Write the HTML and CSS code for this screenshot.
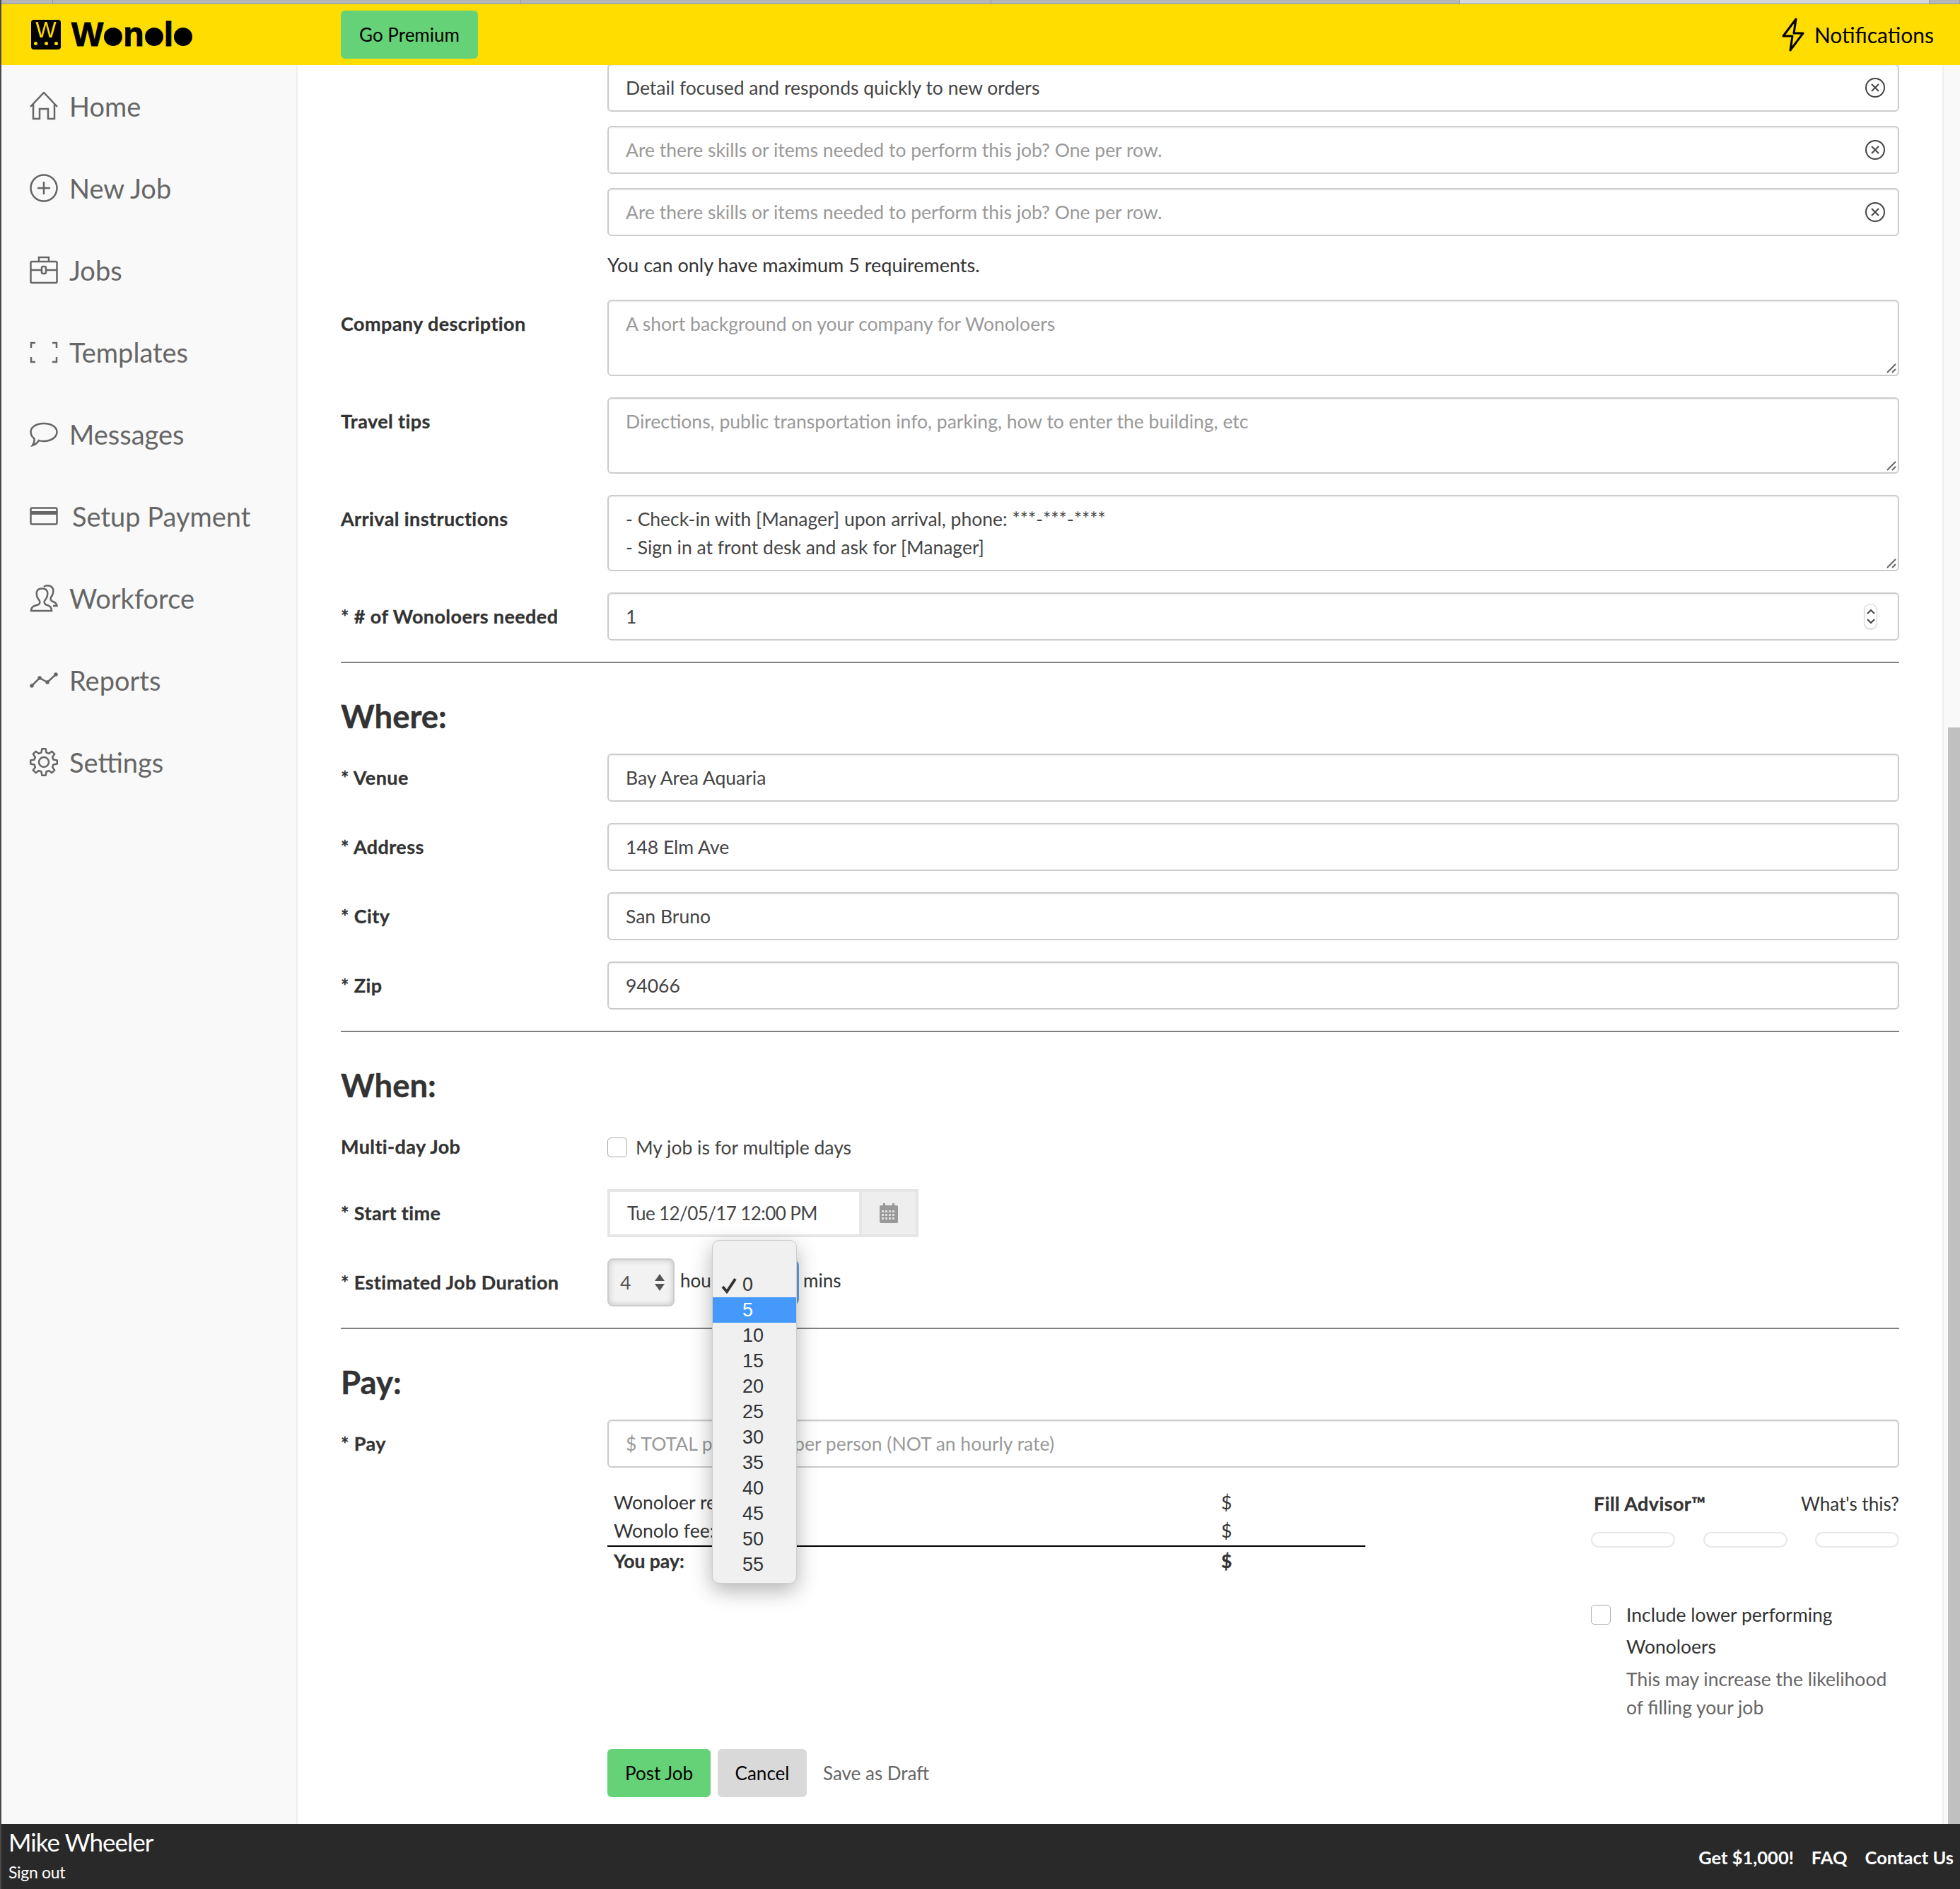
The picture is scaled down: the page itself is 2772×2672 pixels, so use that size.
FILE: index.html
```html
<!DOCTYPE html>
<html lang="en">
<head>
  <meta charset="UTF-8">
  <title>Post a Job</title>
  <link rel="stylesheet" href="styles.css">
</head>
<body>
  <div class="tab-strip">
    <span></span><span></span><span></span><span></span><span class="tab-active"></span><span></span>
  </div>

  <header class="topbar">
    <div class="logo">
      <div class="logo-box">
        W
        <div class="logo-dots"><span></span><span></span><span></span></div>
      </div>
      <div class="logo-word">W<span class="logo-o">o</span>n<span class="logo-o">o</span>l<span class="logo-o">o</span></div>
    </div>
    <a class="btn btn-green btn-premium">Go Premium</a>
    <a class="notifications">
      <svg width="32" height="48" viewBox="0 0 32 48"><path d="M20 2 L2 26 H15 L12 46 L30 22 H17 Z"/></svg>
      Notifications
    </a>
  </header>

  <div class="layout">
    <nav class="sidebar">
      <a class="nav-item">
        <svg class="nav-icon" width="40" height="40" viewBox="0 0 40 40"><path d="M1 21 L20 1 L39 21 M5 17 V38 H14 V24 H26 V38 H35 V17"/></svg>
        Home
      </a>
      <a class="nav-item">
        <svg class="nav-icon" width="40" height="40" viewBox="0 0 40 40"><circle cx="20" cy="20" r="18.5"/><path d="M20 11 V29 M11 20 H29"/></svg>
        New Job
      </a>
      <a class="nav-item">
        <svg class="nav-icon" width="40" height="40" viewBox="0 0 40 40"><rect x="1.5" y="8" width="37" height="30" rx="1.5"/><path d="M13 8 V2 H27 V8 M1.5 20 H16 M24 20 H38.5"/><rect x="17" y="15" width="6" height="10" rx="2"/></svg>
        Jobs
      </a>
      <a class="nav-item">
        <svg class="nav-icon" width="40" height="31" viewBox="0 0 40 31"><path d="M8 2 H2 V9 M32 2 H38 V9 M8 29 H2 V22 M32 29 H38 V22"/></svg>
        Templates
      </a>
      <a class="nav-item">
        <svg class="nav-icon" width="40" height="35" viewBox="0 0 40 35"><path d="M20 2 C31 2 38.5 7.500 38.5 14 C38.500 21 31 27 20 27 C17 27 15 27 13 26 C11 29 8 32 4 33 C6 30 7 27 6.500 23.500 C3.500 21 1.500 18 1.500 14 C1.500 7.500 9 2 20 2 Z"/></svg>
        Messages
      </a>
      <a class="nav-item">
        <svg class="nav-icon" width="40" height="26" viewBox="0 0 40 26"><rect x="1.500" y="1.500" width="37" height="23" rx="2"/><path class="card-band" d="M1.500 8.500 H38.500"/></svg>
        <span class="nav-text-far">Setup Payment</span>
      </a>
      <a class="nav-item">
        <svg class="nav-icon" width="40" height="40" viewBox="0 0 40 40"><path d="M2 38 C2 32 6 31 10 30 C14 29 15 27 14 24 C10 19 9 15 10 11 C12 5 23 5 25 11 C26 15 25 19 21 24 C20 27 21 29 25 30 C29 31 31 33 31 38 Z"/><path d="M20 4 C24 1 31 2 33 7 C34 11 33 15 30 19 C29 22 30 24 33 25 C36 26 38 28 38.500 31 H33"/></svg>
        Workforce
      </a>
      <a class="nav-item">
        <svg class="nav-icon" width="40" height="22" viewBox="0 0 40 22"><path d="M3 19 L14 8 L25 14 L37 3"/><circle class="dot" cx="3" cy="19" r="1.500"/><circle class="dot" cx="14" cy="8" r="1.500"/><circle class="dot" cx="25" cy="14" r="1.500"/><circle class="dot" cx="37" cy="3" r="1.500"/></svg>
        Reports
      </a>
      <a class="nav-item">
        <svg class="nav-icon" width="40" height="40" viewBox="0 0 40 40"><path stroke-linejoin="round" d="M33.500 16.400 L38.800 17.400 L38.800 22.600 L33.500 23.600 L32.100 27 L35.200 31.400 L31.400 35.200 L27 32.100 L23.600 33.500 L22.600 38.800 L17.400 38.800 L16.400 33.500 L13 32.100 L8.600 35.200 L4.800 31.400 L7.900 27 L6.500 23.600 L1.200 22.600 L1.200 17.400 L6.500 16.400 L7.900 13 L4.800 8.600 L8.600 4.800 L13 7.900 L16.400 6.500 L17.400 1.200 L22.600 1.200 L23.600 6.500 L27 7.900 L31.400 4.800 L35.200 8.600 L32.100 13 Z"/><circle cx="20" cy="20" r="7"/></svg>
        Settings
      </a>
    </nav>

    <main class="content">
      <div class="req-list">
        <div class="field field-icon">
          <span>Detail focused and responds quickly to new orders</span>
          <svg class="clear-icon" width="28" height="28" viewBox="0 0 28 28"><circle cx="14" cy="14" r="13"/><path d="M9 9 L19 19 M19 9 L9 19"/></svg>
        </div>
        <div class="field field-icon placeholder">
          <span>Are there skills or items needed to perform this job? One per row.</span>
          <svg class="clear-icon" width="28" height="28" viewBox="0 0 28 28"><circle cx="14" cy="14" r="13"/><path d="M9 9 L19 19 M19 9 L9 19"/></svg>
        </div>
        <div class="field field-icon placeholder">
          <span>Are there skills or items needed to perform this job? One per row.</span>
          <svg class="clear-icon" width="28" height="28" viewBox="0 0 28 28"><circle cx="14" cy="14" r="13"/><path d="M9 9 L19 19 M19 9 L9 19"/></svg>
        </div>
        <p class="req-note">You can only have maximum 5 requirements.</p>
      </div>

      <div class="row">
        <div class="label">Company description</div>
        <div class="textarea placeholder">
          A short background on your company for Wonoloers
          <svg class="resizer" width="14" height="14" viewBox="0 0 14 14"><path d="M1 13 L13 1 M8 13 L13 8"/></svg>
        </div>
      </div>
      <div class="row">
        <div class="label">Travel tips</div>
        <div class="textarea placeholder">
          Directions, public transportation info, parking, how to enter the building, etc
          <svg class="resizer" width="14" height="14" viewBox="0 0 14 14"><path d="M1 13 L13 1 M8 13 L13 8"/></svg>
        </div>
      </div>
      <div class="row">
        <div class="label">Arrival instructions</div>
        <div class="textarea textarea-filled">
          - Check-in with [Manager] upon arrival, phone: ***-***-****<br>
          - Sign in at front desk and ask for [Manager]
          <svg class="resizer" width="14" height="14" viewBox="0 0 14 14"><path d="M1 13 L13 1 M8 13 L13 8"/></svg>
        </div>
      </div>
      <div class="row">
        <div class="label">* # of Wonoloers needed</div>
        <div class="field field-icon">
          <span>1</span>
          <div class="spinner">
            <svg width="12" height="8" viewBox="0 0 12 8"><path d="M1 7 L6 2 L11 7"/></svg>
            <svg width="12" height="8" viewBox="0 0 12 8"><path d="M1 1 L6 6 L11 1"/></svg>
          </div>
        </div>
      </div>

      <hr class="divider">
      <h2 class="section-title">Where:</h2>
      <div class="row">
        <div class="label">* Venue</div>
        <div class="field">Bay Area Aquaria</div>
      </div>
      <div class="row">
        <div class="label">* Address</div>
        <div class="field">148 Elm Ave</div>
      </div>
      <div class="row">
        <div class="label">* City</div>
        <div class="field">San Bruno</div>
      </div>
      <div class="row">
        <div class="label">* Zip</div>
        <div class="field">94066</div>
      </div>

      <hr class="divider">
      <h2 class="section-title section-title-when">When:</h2>
      <div class="row row-check">
        <div class="label">Multi-day Job</div>
        <div class="check-line"><span class="checkbox"></span>My job is for multiple days</div>
      </div>
      <div class="row">
        <div class="label">* Start time</div>
        <div class="date-group">
          <div class="date-input">Tue 12/05/17 12:00 PM</div>
          <div class="date-addon">
            <svg width="26" height="28" viewBox="0 0 26 28">
              <rect class="cal-body" x="0" y="3" width="26" height="25" rx="2"/>
              <rect class="cal-ring" x="5" y="0" width="3" height="5"/>
              <rect class="cal-ring" x="18" y="0" width="3" height="5"/>
              <g class="cal-cells">
                <rect x="3" y="10" width="3" height="3"/><rect x="8" y="10" width="3" height="3"/><rect x="13" y="10" width="3" height="3"/><rect x="18" y="10" width="3" height="3"/>
                <rect x="3" y="15" width="3" height="3"/><rect x="8" y="15" width="3" height="3"/><rect x="13" y="15" width="3" height="3"/><rect x="18" y="15" width="3" height="3"/>
                <rect x="3" y="20" width="3" height="3"/><rect x="8" y="20" width="3" height="3"/><rect x="13" y="20" width="3" height="3"/><rect x="18" y="20" width="3" height="3"/>
              </g>
            </svg>
          </div>
        </div>
      </div>
      <div class="row row-duration">
        <div class="label">* Estimated Job Duration</div>
        <div class="duration">
          <div class="select-box">
            <span>4</span>
            <svg width="14" height="24" viewBox="0 0 14 24"><path d="M7 0 L14 10 H0 Z M7 24 L14 14 H0 Z"/></svg>
          </div>
          <span class="unit unit-hours">hours</span>
          <div class="select-open"></div>
          <span class="unit">mins</span>
          <ul class="select-menu">
            <li class="menu-checked">
              <svg class="menu-check" width="24" height="24" viewBox="0 0 24 24"><path d="M3 14 L9 21 L21 3"/></svg>
              0
            </li>
            <li class="menu-hover">5</li>
            <li>10</li>
            <li>15</li>
            <li>20</li>
            <li>25</li>
            <li>30</li>
            <li>35</li>
            <li>40</li>
            <li>45</li>
            <li>50</li>
            <li>55</li>
          </ul>
        </div>
      </div>

      <hr class="divider">
      <h2 class="section-title section-title-pay">Pay:</h2>
      <div class="row row-pay">
        <div class="label">* Pay</div>
        <div class="field placeholder">$ TOTAL pay for job per person (NOT an hourly rate)</div>
      </div>

      <div class="pay-details">
        <table class="pay-table">
          <tr><td>Wonoloer receives:</td><td class="money">$</td></tr>
          <tr><td>Wonolo fee:</td><td class="money">$</td></tr>
          <tr class="pay-total"><td>You pay:</td><td class="money">$</td></tr>
        </table>
        <aside class="advisor">
          <div class="advisor-head">
            <strong>Fill Advisor&trade;</strong>
            <span>What's this?</span>
          </div>
          <div class="advisor-pills"><span></span><span></span><span></span></div>
          <div class="advisor-check">
            <span class="checkbox"></span>
            <div>
              <div class="advisor-line">Include lower performing Wonoloers</div>
              <div class="advisor-hint">This may increase the likelihood of filling your job</div>
            </div>
          </div>
        </aside>
      </div>

      <div class="actions">
        <a class="btn btn-green btn-post">Post Job</a>
        <a class="btn btn-grey">Cancel</a>
        <a class="draft-link">Save as Draft</a>
      </div>
    </main>

    <div class="scroll-track"><div class="scroll-thumb"></div></div>
  </div>

  <footer class="footer">
    <div class="footer-user">
      <div class="footer-name">Mike Wheeler</div>
      <a class="footer-signout">Sign out</a>
    </div>
    <div class="footer-links">
      <a>Get $1,000!</a>
      <a>FAQ</a>
      <a>Contact Us</a>
    </div>
  </footer>
</body>
</html>
```

FILE: styles.css
```css
* {
  box-sizing: border-box;
}
html, body {
  height: 100%;
}
body {
  margin: 0;
  display: flex;
  flex-direction: column;
  height: 2672px;
  overflow: hidden;
  border-left: 2px solid #4a4a4a;
  font-family: Lato, "Noto Sans", sans-serif;
  font-size: 26.5px;
  color: #333;
  background-color: #fff;
}

/* browser tabs peeking in at the top */
.tab-strip {
  display: grid;
  grid-template-columns: 73px 662px 665px 663px 664px 1fr;
  height: 6px;
  flex: none;
  background-color: #b6b6b6;
  border-bottom: 1px solid #999;
}
.tab-strip span {
  border-right: 1px solid #999;
}
.tab-strip .tab-active {
  background-color: #d6d6d6;
}

.topbar {
  display: flex;
  align-items: center;
  height: 86px;
  flex: none;
  padding: 0 37px 0 42px;
  background-color: #fd0;
  color: #000;
}
.logo {
  display: flex;
  align-items: center;
  gap: 15px;
  width: 438px;
}
.logo-box {
  display: flex;
  flex-direction: column;
  align-items: center;
  width: 42px;
  height: 42px;
  padding-top: 2px;
  border-radius: 4px;
  background-color: #000;
  color: #fd0;
  font-family: "Liberation Sans", sans-serif;
  font-size: 31px;
  line-height: 26px;
}
.logo-dots {
  display: flex;
  justify-content: space-between;
  width: 34px;
  margin-top: 3px;
}
.logo-dots span {
  width: 5px;
  height: 5px;
  border-radius: 50%;
  background-color: #fd0;
}
.logo-word {
  font-family: "Liberation Sans", sans-serif;
  font-weight: bold;
  font-size: 48px;
  line-height: 48px;
  white-space: nowrap;
  -webkit-text-stroke: 1px #000;
}
.logo-o {
  display: inline-block;
  width: 26px;
  height: 26px;
  margin: 0 1px;
  overflow: hidden;
  border-radius: 50%;
  background-color: #000;
  font-size: 20px;
  line-height: 26px;
  text-align: center;
}
.btn {
  display: flex;
  align-items: center;
  justify-content: center;
  height: 68px;
  border-radius: 6px;
  font-size: 26px;
  color: #000;
}
.btn-green {
  background-color: #66d277;
}
.btn-grey {
  width: 126px;
  background-color: #d9d9d9;
}
.btn-premium {
  width: 194px;
}
.notifications {
  display: flex;
  align-items: center;
  gap: 14px;
  margin-left: auto;
  font-size: 30px;
}
.notifications svg {
  fill: none;
  stroke: #000;
  stroke-width: 3;
  stroke-linejoin: round;
}

.layout {
  display: flex;
  flex: 1;
  min-height: 0;
}
.sidebar {
  flex: none;
  width: 421px;
  margin-left: -2px;
  padding-left: 2px;
  background-color: #f9f9f9;
  border-right: 2px solid #eee;
}
.nav-item {
  display: flex;
  align-items: center;
  gap: 16px;
  height: 116px;
  padding-left: 40px;
  font-size: 38px;
  color: #666;
}
.nav-icon {
  flex: none;
  fill: none;
  stroke: #666;
  stroke-width: 2.5;
}
.nav-icon .dot {
  fill: #666;
}
.nav-icon .card-band {
  stroke-width: 5;
}
.nav-text-far {
  margin-left: 4px;
}

.content {
  flex: 1;
  min-width: 0;
  overflow: hidden;
  padding: 0 61px;
}
.req-list {
  margin: -2px 0 0 377px;
}
.field {
  display: flex;
  align-items: center;
  justify-content: space-between;
  width: 100%;
  height: 68px;
  padding: 0 18px 0 24px;
  border: 2px solid #ccc;
  border-radius: 6px;
  box-shadow: inset 0 1px 2px rgba(0,0,0,0.08);
  color: #444;
  background-color: #fff;
}
.req-list .field {
  margin-bottom: 20px;
}
.placeholder {
  color: #999;
}
.clear-icon {
  fill: none;
  stroke: #444;
  stroke-width: 2;
}
.req-note {
  margin: 21px 0 29px;
  font-size: 27px;
  line-height: 40px;
}
.row {
  display: grid;
  grid-template-columns: 377px 1fr;
  margin-bottom: 30px;
}
.label {
  font-size: 27px;
  font-weight: bold;
  letter-spacing: 0.4px;
  line-height: 68px;
  -webkit-text-stroke: 0.3px #333;
}
.textarea {
  position: relative;
  height: 108px;
  padding: 12px 24px;
  border: 2px solid #ccc;
  border-radius: 6px;
  box-shadow: inset 0 1px 2px rgba(0,0,0,0.08);
  line-height: 40px;
}
.textarea-filled {
  color: #444;
}
.resizer {
  position: absolute;
  right: 2px;
  bottom: 2px;
  fill: none;
  stroke: #666;
  stroke-width: 2;
}
.spinner {
  display: flex;
  flex-direction: column;
  align-items: center;
  justify-content: center;
  gap: 6px;
  width: 19px;
  height: 36px;
  margin-right: 11px;
  border: 1px solid #ccc;
  border-radius: 9px;
  box-shadow: 0 1px 1px rgba(0,0,0,0.15);
}
.spinner svg {
  fill: none;
  stroke: #444;
  stroke-width: 2;
}

.divider {
  height: 2px;
  margin: 0;
  border: none;
  background-color: #808080;
}
.section-title {
  margin: 50px 0 28px;
  font-size: 45.5px;
  line-height: 50px;
  font-weight: bold;
  -webkit-text-stroke: 0.4px #333;
}
.section-title-when {
  margin-bottom: 43px;
}
.section-title-pay {
  margin-bottom: 28px;
}

.row-check {
  margin-bottom: 39px;
}
.row-check .label {
  line-height: 38px;
}
.check-line {
  display: flex;
  align-items: center;
  gap: 12px;
  height: 40px;
  color: #444;
}
.checkbox {
  flex: none;
  width: 28px;
  height: 28px;
  border: 1px solid #aaa;
  border-radius: 5px;
  background-color: #fff;
}
.date-group {
  display: flex;
  gap: 4px;
  width: 440px;
  height: 68px;
  padding: 4px;
  background-color: #e6e6e6;
}
.date-input {
  flex: 1;
  padding-left: 24px;
  font-size: 26px;
  letter-spacing: -0.6px;
  line-height: 60px;
  color: #444;
  background-color: #fff;
}
.date-addon {
  display: flex;
  align-items: center;
  justify-content: center;
  width: 76px;
  background-color: #eee;
}
.cal-body {
  fill: #999;
}
.cal-ring {
  fill: #999;
}
.cal-cells rect {
  fill: #ddd;
}

.duration {
  position: relative;
  display: flex;
  align-items: center;
  gap: 8px;
  height: 68px;
}
.select-box {
  display: flex;
  align-items: center;
  justify-content: space-between;
  width: 95px;
  height: 68px;
  padding: 0 12px 0 16px;
  border: 2px solid #ccc;
  border-radius: 8px;
  background-color: #f2f2f2;
  box-shadow: inset 0 0 8px rgba(0,0,0,0.2);
  color: #555;
}
.select-box svg {
  fill: #555;
}
.unit {
  margin-bottom: 6px;
  font-size: 26px;
}
.unit-hours {
  width: 60px;
}
.select-open {
  width: 100px;
  height: 64px;
  margin-right: -2px;
  border: 3px solid #6aa5e8;
  border-radius: 8px;
}
.select-menu {
  position: absolute;
  top: -26px;
  left: 148px;
  z-index: 5;
  width: 120px;
  height: 486px;
  margin: 0;
  padding: 44px 0 0;
  list-style: none;
  border: 1px solid #ccc;
  border-radius: 10px;
  background-color: #f0f0f0;
  box-shadow: 0 10px 30px rgba(0,0,0,0.3);
  font-family: "Liberation Sans", sans-serif;
  font-size: 27px;
}
.select-menu li {
  position: relative;
  height: 36px;
  padding-left: 42px;
  line-height: 36px;
}
.menu-check {
  position: absolute;
  left: 11px;
  top: 7px;
  fill: none;
  stroke: #333;
  stroke-width: 4;
}
.menu-hover {
  background-color: #4599fb;
  color: #fff;
}

.pay-details {
  display: flex;
  justify-content: space-between;
  margin-left: 377px;
}
.row-pay {
  margin-bottom: 29px;
}
.pay-table {
  width: 1072px;
  height: 123px;
  border-collapse: collapse;
  align-self: flex-start;
}
.pay-table td {
  height: 40px;
  padding: 0 0 0 9px;
  line-height: 40px;
}
.pay-table td.money {
  width: 204px;
  padding-left: 0;
}
.pay-total td {
  border-top: 2px solid #000;
  font-weight: bold;
  -webkit-text-stroke: 0.3px #333;
}

.advisor {
  width: 436px;
}
.advisor-head {
  display: flex;
  justify-content: space-between;
  padding-left: 4px;
  font-size: 26px;
  line-height: 44px;
}
.advisor-head strong {
  font-size: 27px;
  letter-spacing: 0.4px;
  -webkit-text-stroke: 0.3px #333;
}
.advisor-pills {
  display: flex;
  justify-content: space-between;
  margin-top: 18px;
}
.advisor-pills span {
  width: 119px;
  height: 22px;
  border: 2px solid #e8e8e8;
  border-radius: 11px;
}
.advisor-check {
  display: flex;
  gap: 22px;
  margin-top: 73px;
}
.advisor-check .checkbox {
  margin-top: 8px;
}
.advisor-line {
  line-height: 45px;
}
.advisor-hint {
  margin-top: 3px;
  line-height: 40px;
  color: #666;
}

.actions {
  display: flex;
  align-items: center;
  gap: 10px;
  margin: 39px 0 0 377px;
}
.btn-post {
  width: 146px;
}
.draft-link {
  margin-left: 13px;
  font-size: 26px;
  color: #666;
}

.scroll-track {
  flex: none;
  width: 25px;
  padding: 937px 0 0 6px;
  background-color: #f9f9f9;
  border-left: 2px solid #eee;
}
.scroll-thumb {
  height: 100%;
  background-color: #c0c0c0;
}

.footer {
  display: flex;
  justify-content: space-between;
  height: 92px;
  flex: none;
  margin-left: -2px;
  padding: 0 9px 0 12px;
  background-color: #292929;
  color: #fff;
}
.footer-name {
  margin-top: 3px;
  font-size: 35px;
  letter-spacing: -1px;
  line-height: 44px;
}
.footer-signout {
  display: block;
  margin-top: 7px;
  font-size: 23px;
  letter-spacing: -0.3px;
  line-height: 28px;
}
.footer-links {
  display: flex;
  align-items: center;
  gap: 25px;
  padding-top: 2px;
  font-size: 25.5px;
  font-weight: bold;
}
```
